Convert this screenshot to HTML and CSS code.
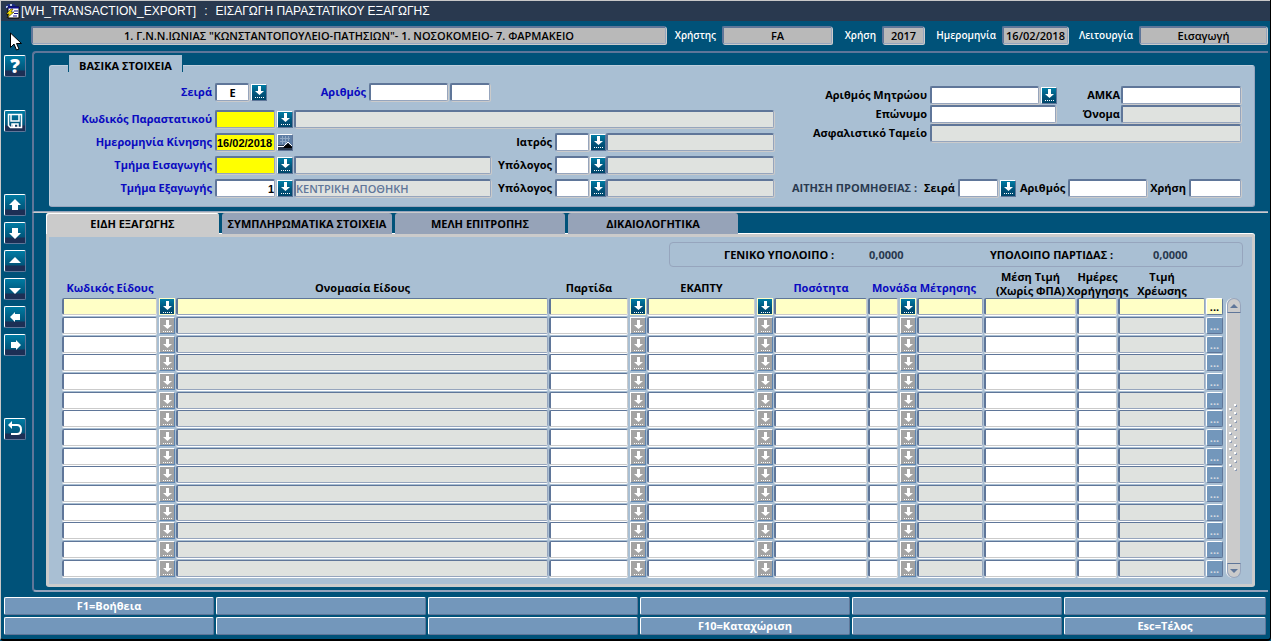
FILE: index.html
```html
<!DOCTYPE html>
<html lang="el">
<head>
    <meta charset="UTF-8">
    <meta name="viewport" content="width=device-width, initial-scale=1.0">
    <title>[WH_TRANSACTION_EXPORT] : ΕΙΣΑΓΩΓΗ ΠΑΡΑΣΤΑΤΙΚΟΥ ΕΞΑΓΩΓΗΣ</title>
    <link rel="stylesheet" href="styles.css">
</head>
<body>
    <!-- Shared icons -->
    <svg class="sprite" aria-hidden="true">
        <symbol id="i-list" viewBox="0 0 14 14">
            <path d="M6 1h3v5h3L7.500 10 3 6h3z" fill="#fff"/>
            <path d="M3 12.500h10" stroke="#fff" stroke-dasharray="1 1"/>
        </symbol>
        <symbol id="i-calendar" viewBox="0 0 14 14">
            <path d="M0 0h14v10H0z" fill="#5f7fa6"/>
            <path d="M2 3.500h10M2 6.500h7M4.500 1v8M7.500 1v8M10.500 1v5" stroke="#8fa8c4" fill="none"/>
            <path d="M0 11.500h6" stroke="#fff"/>
            <path d="M5 13l5-5 4 4v1z" fill="#000"/>
            <path d="M5 12l5-5 4 4" stroke="#fff" fill="none"/>
        </symbol>
        <symbol id="i-save" viewBox="0 0 18 18">
            <path d="M2.500 2.500h13v13h-11l-2-2z" fill="none" stroke="#fff" stroke-width="1.500"/>
            <path d="M5 3v6h8V3M6 16v-4h6v4" fill="none" stroke="#fff" stroke-width="1.500"/>
            <path d="M7 12h2v3H7z" fill="#fff"/>
        </symbol>
        <symbol id="i-up" viewBox="0 0 18 18"><path d="M9 3l6 6h-3v5H6V9H3z" fill="#fff"/></symbol>
        <symbol id="i-down" viewBox="0 0 18 18"><path d="M9 15l6-6h-3V4H6v5H3z" fill="#fff"/></symbol>
        <symbol id="i-left" viewBox="0 0 18 18"><path d="M4 9l5-5v2h5v6H9v2z" fill="#fff"/></symbol>
        <symbol id="i-right" viewBox="0 0 18 18"><path d="M15 9l-5-5v2H5v6h5v2z" fill="#fff"/></symbol>
        <symbol id="i-prev" viewBox="0 0 18 18"><path d="M9 5l6 6H3z" fill="#fff"/></symbol>
        <symbol id="i-next" viewBox="0 0 18 18"><path d="M9 14l6-6H3z" fill="#fff"/></symbol>
        <symbol id="i-undo" viewBox="0 0 18 18">
            <path d="M3 5h8q4 0 4 4.500t-4 4.500H5" fill="none" stroke="#fff" stroke-width="2"/>
            <path d="M2 5l4-4v8z" fill="#fff"/>
        </symbol>
    </svg>

    <header class="titlebar">
        <svg class="app-icon" viewBox="0 0 16 16" aria-hidden="true">
            <path d="M1 4l3-3h6l3 3-2 2H3z" fill="#1b2f86"/>
            <path d="M2 3h2v2H2zM6 1h2v2H6z" fill="#b8c4e8"/>
            <path d="M4 4h11v11H4z" fill="#fff" stroke="#000"/>
            <path d="M4 4.500h11" stroke="#10108c" stroke-width="2"/>
            <path d="M10 8h4M10 10.500h4M9 13h4" stroke="#10108c"/>
            <path d="M7 6L2 11h3l-2 4 7-6H7l2-3z" fill="#f6e000" stroke="#000" stroke-width=".5"/>
        </svg>
        <span>[WH_TRANSACTION_EXPORT]</span>
        <span>:</span>
        <span>ΕΙΣΑΓΩΓΗ ΠΑΡΑΣΤΑΤΙΚΟΥ ΕΞΑΓΩΓΗΣ</span>
    </header>

    <div class="main">
        <nav class="sidebar">
            <svg class="cursor" viewBox="0 0 13 19" aria-hidden="true">
                <path d="M.5 1v14.500l3.500-3.500 2.500 6 2.500-1-2.500-5.500h5z" fill="#fff" stroke="#000"/>
            </svg>
            <button class="tool help" aria-label="Βοήθεια">?</button>
            <button class="tool gap-1" aria-label="Αποθήκευση"><svg><use href="#i-save"/></svg></button>
            <button class="tool gap-2" aria-label="Πρώτη"><svg><use href="#i-up"/></svg></button>
            <button class="tool" aria-label="Τελευταία"><svg><use href="#i-down"/></svg></button>
            <button class="tool" aria-label="Προηγούμενη"><svg><use href="#i-prev"/></svg></button>
            <button class="tool" aria-label="Επόμενη"><svg><use href="#i-next"/></svg></button>
            <button class="tool" aria-label="Αριστερά"><svg><use href="#i-left"/></svg></button>
            <button class="tool" aria-label="Δεξιά"><svg><use href="#i-right"/></svg></button>
            <button class="tool gap-2" aria-label="Επιστροφή"><svg><use href="#i-undo"/></svg></button>
        </nav>

        <div class="content">
            <div class="infobar">
                <input class="info unit" aria-label="Μονάδα" value='1. Γ.Ν.Ν.ΙΩΝΙΑΣ "ΚΩΝΣΤΑΝΤΟΠΟΥΛΕΙΟ-ΠΑΤΗΣΙΩΝ"- 1. ΝΟΣΟΚΟΜΕΙΟ- 7. ΦΑΡΜΑΚΕΙΟ' readonly>
                <label class="user" for="user">Χρήστης</label>
                <input class="info w110" id="user" value="FA" readonly>
                <label class="year" for="year">Χρήση</label>
                <input class="info w42" id="year" value="2017" readonly>
                <label class="date" for="date">Ημερομηνία</label>
                <input class="info w66" id="date" value="16/02/2018" readonly>
                <label class="mode" for="mode">Λειτουργία</label>
                <input class="info w128" id="mode" value="Εισαγωγή" readonly>
            </div>

            <section class="frame frame-top">
                <h2 class="legend">ΒΑΣΙΚΑ ΣΤΟΙΧΕΙΑ</h2>
                <form class="basics">
                    <div class="basics-left">
                        <div class="row first">
                            <label class="lbl req" for="series">Σειρά</label>
                            <input class="w34 center" id="series" value="Ε">
                            <button type="button" class="lov" aria-label="Λίστα σειρών"><svg><use href="#i-list"/></svg></button>
                            <label class="lbl-num req" for="num">Αριθμός</label>
                            <input class="w79" id="num">
                            <input class="w40" aria-label="Αριθμός 2">
                        </div>
                        <div class="row">
                            <label class="lbl req" for="doc">Κωδικός Παραστατικού</label>
                            <input class="w60 must" id="doc">
                            <button type="button" class="lov" aria-label="Λίστα παραστατικών"><svg><use href="#i-list"/></svg></button>
                            <input class="grow" aria-label="Περιγραφή παραστατικού" readonly>
                        </div>
                        <div class="row">
                            <label class="lbl req" for="moved">Ημερομηνία Κίνησης</label>
                            <input class="w60 must" id="moved" value="16/02/2018">
                            <button type="button" class="lov cal" aria-label="Ημερολόγιο"><svg><use href="#i-calendar"/></svg></button>
                            <label class="lbl-mid" for="doctor">Ιατρός</label>
                            <input class="w34" id="doctor">
                            <button type="button" class="lov" aria-label="Λίστα ιατρών"><svg><use href="#i-list"/></svg></button>
                            <input class="w168" aria-label="Όνομα ιατρού" readonly>
                        </div>
                        <div class="row">
                            <label class="lbl req" for="dep-in">Τμήμα Εισαγωγής</label>
                            <input class="w60 must" id="dep-in">
                            <button type="button" class="lov" aria-label="Λίστα τμημάτων"><svg><use href="#i-list"/></svg></button>
                            <input class="grow" aria-label="Περιγραφή τμήματος εισαγωγής" readonly>
                            <label class="lbl-sub" for="resp-in">Υπόλογος</label>
                            <input class="w34" id="resp-in">
                            <button type="button" class="lov" aria-label="Λίστα υπολόγων"><svg><use href="#i-list"/></svg></button>
                            <input class="w168" aria-label="Όνομα υπολόγου εισαγωγής" readonly>
                        </div>
                        <div class="row">
                            <label class="lbl req" for="dep-out">Τμήμα Εξαγωγής</label>
                            <input class="w60 right" id="dep-out" value="1">
                            <button type="button" class="lov" aria-label="Λίστα τμημάτων"><svg><use href="#i-list"/></svg></button>
                            <input class="grow" aria-label="Περιγραφή τμήματος εξαγωγής" value="ΚΕΝΤΡΙΚΗ ΑΠΟΘΗΚΗ" readonly>
                            <label class="lbl-sub" for="resp-out">Υπόλογος</label>
                            <input class="w34" id="resp-out">
                            <button type="button" class="lov" aria-label="Λίστα υπολόγων"><svg><use href="#i-list"/></svg></button>
                            <input class="w168" aria-label="Όνομα υπολόγου εξαγωγής" readonly>
                        </div>
                    </div>

                    <div class="basics-right">
                        <div class="patient">
                            <div class="row">
                                <label class="lbl-pat" for="reg">Αριθμός Μητρώου</label>
                                <input class="w109" id="reg">
                                <button type="button" class="lov" aria-label="Λίστα μητρώου"><svg><use href="#i-list"/></svg></button>
                                <label class="lbl-amka" for="amka">ΑΜΚΑ</label>
                                <input class="w120" id="amka">
                            </div>
                            <div class="row">
                                <label class="lbl-pat" for="surname">Επώνυμο</label>
                                <input class="w126" id="surname">
                                <label class="lbl-amka" for="name">Όνομα</label>
                                <input class="w120" id="name" readonly>
                            </div>
                            <div class="row">
                                <label class="lbl-pat" for="fund">Ασφαλιστικό Ταμείο</label>
                                <input class="grow" id="fund" readonly>
                            </div>
                        </div>
                        <div class="row request">
                            <span class="request-title">ΑΙΤΗΣΗ ΠΡΟΜΗΘΕΙΑΣ :</span>
                            <label for="rq-series">Σειρά</label>
                            <input class="w40" id="rq-series">
                            <button type="button" class="lov" aria-label="Λίστα αιτήσεων"><svg><use href="#i-list"/></svg></button>
                            <label class="lbl-rq" for="rq-num">Αριθμός</label>
                            <input class="w79" id="rq-num">
                            <label class="lbl-rq" for="rq-year">Χρήση</label>
                            <input class="w52" id="rq-year">
                        </div>
                    </div>
                </form>
            </section>

            <section class="frame frame-bottom">
                <div class="tabs" role="tablist">
                    <button class="tab active" role="tab" aria-selected="true">ΕΙΔΗ ΕΞΑΓΩΓΗΣ</button>
                    <button class="tab" role="tab">ΣΥΜΠΛΗΡΩΜΑΤΙΚΑ ΣΤΟΙΧΕΙΑ</button>
                    <button class="tab" role="tab">ΜΕΛΗ ΕΠΙΤΡΟΠΗΣ</button>
                    <button class="tab" role="tab">ΔΙΚΑΙΟΛΟΓΗΤΙΚΑ</button>
                </div>
                <div class="panel">
                    <div class="totals">
                        <span>ΓΕΝΙΚΟ ΥΠΟΛΟΙΠΟ :</span>
                        <output>0,0000</output>
                        <span>ΥΠΟΛΟΙΠΟ ΠΑΡΤΙΔΑΣ :</span>
                        <output>0,0000</output>
                    </div>
                    <div class="items">
                        <table>
                            <colgroup>
                                <col class="c-code"><col class="c-btn"><col><col class="c-lot"><col class="c-btn">
                                <col class="c-ekapty"><col class="c-btn"><col class="c-qty"><col class="c-unit"><col class="c-btn">
                                <col class="c-desc"><col class="c-avg"><col class="c-days"><col class="c-charge"><col class="c-more">
                            </colgroup>
                            <thead>
                                <tr>
                                    <th class="req">Κωδικός Είδους</th>
                                    <th></th>
                                    <th>Ονομασία Είδους</th>
                                    <th>Παρτίδα</th>
                                    <th></th>
                                    <th>ΕΚΑΠΤΥ</th>
                                    <th></th>
                                    <th class="req">Ποσότητα</th>
                                    <th class="req unit-head" colspan="3">Μονάδα Μέτρησης</th>
                                    <th class="two">Μέση Τιμή<br>(Χωρίς ΦΠΑ)</th>
                                    <th class="two"><span>Ημέρες<br>Χορήγησης</span></th>
                                    <th class="two">Τιμή<br>Χρέωσης</th>
                                    <th></th>
                                </tr>
                            </thead>
                            <tbody id="rows"></tbody>
                        </table>
                        <div class="scroll">
                            <button class="scroll-btn top" aria-label="Πάνω"><svg viewBox="0 0 8 4"><path d="M4 0l4 4H0z"/></svg></button>
                            <svg class="grip" aria-hidden="true">
                                <pattern id="dots" width="10" height="8" patternUnits="userSpaceOnUse">
                                    <path d="M1 5h2v2H1zM6 1h2v2H6z" fill="#8f9db5"/>
                                    <path d="M0 4h2v2H0zM5 0h2v2H5z" fill="#fff"/>
                                </pattern>
                                <rect width="10" height="68" fill="url(#dots)"/>
                            </svg>
                            <button class="scroll-btn bottom" aria-label="Κάτω"><svg viewBox="0 0 8 4"><path d="M0 0h8L4 4z"/></svg></button>
                        </div>
                    </div>
                </div>
            </section>
        </div>
    </div>

    <footer class="keys">
        <button>F1=Βοήθεια</button>
        <button></button>
        <button></button>
        <button></button>
        <button></button>
        <button></button>
        <button></button>
        <button></button>
        <button></button>
        <button>F10=Καταχώριση</button>
        <button></button>
        <button>Esc=Τέλος</button>
    </footer>

    <script src="script.js"></script>
</body>
</html>
```
FILE: styles.css
```css
/* General Styles */
* {
    box-sizing: border-box;
}

body {
    margin: 0;
    min-height: 100vh;
    display: flex;
    flex-direction: column;
    background: #005279;
    border-left: 1px solid #c8c8c8;
    border-right: 1px solid #000;
    border-bottom: 2px solid #000;
    border-radius: 0 0 4px 4px;
    font-family: "Open Sans", "Noto Sans", sans-serif;
    font-size: 11px;
    font-weight: 700;
    line-height: 14px;
    color: #000;
}

button,
input {
    font: inherit;
    margin: 0;
    padding: 0;
    border-radius: 0;
}

.sprite {
    position: absolute;
    width: 0;
    height: 0;
}

/* Title */
.titlebar {
    display: flex;
    align-items: center;
    gap: 8px;
    height: 21px;
    padding-left: 3px;
    border-top: 1px solid #c8c8c8;
    background: #29394f;
    color: #fff;
    font: 12px/16px "Liberation Sans", Arial, sans-serif;
}

.app-icon {
    width: 16px;
    height: 16px;
    margin-right: -7px;
}

.main {
    flex: 1;
    display: flex;
}

/* Left toolbar */
.sidebar {
    position: relative;
    flex: 0 0 30px;
    display: flex;
    flex-direction: column;
    gap: 6px;
    padding: 34px 0 0 3px;
}

.cursor {
    position: absolute;
    top: 11px;
    left: 9px;
    width: 13px;
    height: 19px;
}

.tool {
    width: 22px;
    height: 22px;
    border: 1px solid #5f7699;
    border-top-color: #fff;
    border-left-color: #fff;
    border-radius: 2px;
    background: linear-gradient(#007ba3, #005f85 50%, #00557a 72%, #1c2f55 73%);
    color: #fff;
}

.tool svg {
    display: block;
    width: 18px;
    height: 18px;
    margin: 0 auto;
}

.help {
    font-size: 19px;
    line-height: 18px;
    font-weight: 800;
}

.gap-1 {
    margin-top: 27px;
}

.gap-2 {
    margin-top: 56px;
}

/* Content */
.content {
    flex: 1;
    min-width: 0;
    padding-top: 5px;
}

.infobar {
    display: flex;
    align-items: center;
    padding: 0 3px 7px 0;
    color: #fff;
    font-weight: 600;
}

.infobar label {
    font-size: 10px;
    text-align: right;
    padding-right: 6px;
    white-space: nowrap;
}

.info,
.row input {
    height: 18px;
    min-width: 0;
    padding: 0;
    border: 1px solid #96a5bd;
    border-top: 2px solid #5f7699;
    border-left: 2px solid #5f7699;
    border-radius: 2px;
    box-shadow: 1px 1px 0 #cbcbcb;
    background: #fff;
    color: #000;
}

.infobar .info {
    height: 18px;
    background: #b9b9b9;
    text-align: center;
}

.info.unit {
    flex: 1;
}

.user {
    width: 56px;
}

.year {
    width: 50px;
}

.date {
    width: 78px;
}

.mode {
    width: 71px;
}

/* Frames */
.frame {
    border-left: 2px solid #5f7699;
    margin: 0 2px 0 1px;
}

.frame-top {
    border-top: 2px solid #5f7699;
    border-bottom: 1px solid #96a5bd;
    border-radius: 4px 0 0 0;
    padding: 2px 13px 4px 15px;
}

.legend {
    position: relative;
    width: 115px;
    height: 17px;
    margin: 0 0 -7px 19px;
    border: solid #005279;
    border-width: 0 1px;
    background: #a9bfd3;
    font-size: 11px;
    line-height: 21px;
    text-align: center;
}

.basics {
    display: flex;
    gap: 18px;
    padding: 17px 13px 9px 0;
    border: 1px solid #96a5bd;
    border-top-color: #c0cfdd;
    border-left-color: #c0cfdd;
    border-radius: 3px;
    background: #a9bfd3;
}

.basics-left {
    flex: 1;
    min-width: 0;
    display: flex;
    flex-direction: column;
    gap: 5px;
}

.basics-right {
    flex: 0 0 449px;
    display: flex;
    flex-direction: column;
    justify-content: space-between;
    padding-top: 3px;
}

.row {
    display: flex;
    align-items: center;
}

.row.first {
    margin-bottom: 4px;
}

.row label {
    text-align: right;
    padding-right: 3px;
    white-space: nowrap;
}

.row .req,
.req {
    color: #0a0ac0;
}

.row .must {
    background: #ff0;
}

.row .must,
.row .right {
    font-family: "Liberation Sans", Arial, sans-serif;
}

.row input[readonly] {
    background: #dfe2df;
    color: #5f7699;
    font-weight: 600;
}

.row .center {
    text-align: center;
}

.row .right {
    text-align: right;
}

.row .grow {
    flex: 1;
}

.lbl {
    width: 165px;
}

.lbl-num {
    width: 101px;
}

.row .lbl-mid {
    flex: 1;
}

.lbl-sub {
    width: 64px;
}

.lbl-pat {
    width: 138px;
}

.row .lbl-amka {
    flex: 1;
    padding-right: 1px;
}

.w34 { width: 34px; }
.w40 { width: 40px; }
.w42 { width: 42px; }
.w52 { width: 52px; }
.w60 { width: 60px; }
.w66 { width: 66px; }
.w79 { width: 79px; }
.w109 { width: 109px; }
.w110 { width: 110px; }
.w120 { width: 120px; }
.w126 { width: 126px; }
.w128 { width: 128px; }
.w168 { width: 168px; }

#num {
    margin-right: 2px;
}

.lov {
    flex: none;
    width: 16px;
    height: 17px;
    margin: 0 0 0 1px;
    border: 1px solid #5f7699;
    border-top-color: #fff;
    border-left-color: #fff;
    background: linear-gradient(#007ba3, #005279 60%, #00466a);
}

.row .w60 + .lov,
.row .w40 + .lov,
.row .w109 + .lov,
.row .center + .lov {
    margin: 0 1px 0 2px;
}

.lov svg {
    display: block;
    width: 14px;
    height: 14px;
}

.lov.cal {
    background: #29394f;
}

.patient .row {
    margin-bottom: 1px;
}

.request-title {
    flex: 1;
    color: #29394f;
    white-space: nowrap;
}

.lbl-rq {
    padding-left: 3px;
}

/* Tabs */
.frame-bottom {
    border-top: 1px solid #cbcbcb;
    border-bottom: 2px solid #96a5bd;
    border-radius: 0 0 0 4px;
    padding: 0 13px 3px 12px;
}

.tabs {
    display: flex;
    gap: 3px;
}

.tab {
    width: 170px;
    height: 21px;
    border: 0;
    border-radius: 3px 3px 0 0;
    background: #96a3b8;
    white-space: nowrap;
}

.tab.active {
    width: 173px;
    background: #cbcbcb;
    box-shadow: inset 1px 1px 0 #fff;
}

.panel {
    border: 3px solid #cbcbcb;
    border-radius: 0 3px 3px 3px;
    background: #a9bfd3;
    box-shadow: 0 -1px 0 #fff;
    padding: 5px 9px 6px 13px;
}

.totals {
    display: flex;
    align-items: center;
    width: 574px;
    height: 25px;
    margin: 0 0 3px auto;
    padding-left: 54px;
    border: 1px solid #96a5bd;
    border-radius: 4px;
}

.totals span {
    width: 145px;
    white-space: nowrap;
}

.totals output {
    width: 121px;
    color: #29394f;
}

.totals output + span {
    width: 163px;
}

.totals output:last-child {
    width: auto;
}

/* Items table */
.items {
    display: flex;
    gap: 2px;
    padding-right: 3px;
}

table {
    flex: 1;
    min-width: 0;
    table-layout: fixed;
    border-collapse: collapse;
}

th {
    height: 28px;
    padding: 0 0 3px;
    vertical-align: bottom;
    white-space: nowrap;
}

th.two {
    padding-bottom: 0;
}

th.two span {
    display: block;
    margin: 0 -12px;
}

th.unit-head {
    text-align: left;
    padding-left: 4px;
}

td {
    height: 19px;
    padding: 0;
    line-height: 0;
    vertical-align: top;
}

tr:nth-child(3n) td {
    height: 18px;
}

.c-code { width: 96px; }
.c-btn { width: 18px; }
.c-lot { width: 80px; }
.c-ekapty { width: 109px; }
.c-qty { width: 94px; }
.c-unit { width: 31px; }
.c-desc { width: 67px; }
.c-avg { width: 93px; }
.c-days { width: 41px; }
.c-charge { width: 88px; }
.c-more { width: 18px; }

td input {
    width: calc(100% - 1px);
    height: 17px;
    border: 1px solid #cbcbcb;
    border-top-color: #5f7699;
    border-left: 2px solid #5f7699;
    border-radius: 2px;
    background: #fff;
    box-shadow: 0 1px 0 #fff;
    line-height: 14px;
}

td input[readonly] {
    background: #dfe2df;
    border-right-color: #96a5bd;
    border-bottom-color: #96a5bd;
}

td .lov {
    border-color: #fff #5f85b0 #5f85b0 #fff;
    background: #a3a3a3;
}

td .more {
    width: 17px;
    height: 17px;
    border: 1px solid #5f7699;
    border-top-color: #fff;
    border-left-color: #fff;
    border-radius: 2px;
    background: #7397bb;
    color: #d5dbe2;
    line-height: 14px;
}

/* Current row */
.current input,
.current input[readonly],
.current .more {
    background: #ffffc6;
}

.current .more {
    color: #000;
}

.current .lov {
    border-color: #ffffc6;
    background: linear-gradient(#007ba3, #005279 60%, #00466a);
}

/* Scrollbar */
.scroll {
    width: 14px;
    margin-top: 28px;
    display: flex;
    flex-direction: column;
    justify-content: space-between;
    align-items: center;
    background: #cbcbcb;
    border-left: 1px solid #fff;
    border-radius: 7px;
}

.scroll-btn {
    width: 14px;
    height: 15px;
    border: 1px solid #96a5bd;
    background: #cbcbcb;
}

.scroll-btn.top {
    border-radius: 7px 7px 0 0;
    border-bottom-color: #5f7699;
}

.scroll-btn.bottom {
    border-radius: 0 0 7px 7px;
    border-top-color: #5f7699;
}

.scroll-btn svg {
    display: block;
    width: 8px;
    height: 4px;
    margin: 0 auto;
    fill: #5f7699;
}

.grip {
    width: 10px;
    height: 68px;
}

/* Function keys */
.keys {
    display: grid;
    grid-template-columns: repeat(5, 210fr) 202fr;
    gap: 2px;
    padding: 5px 4px 4px 3px;
}

.keys button {
    height: 18px;
    border: 1px solid #5f7699;
    border-top-color: #fff;
    border-left-color: #fff;
    border-radius: 2px;
    background: #7397bb;
    color: #fff;
}
```
FILE: script.js
```js
// i = input, r = read-only, b = list button, m = more
const columns = [
    ['i', 'Κωδικός Είδους'], ['b', 'Λίστα ειδών'], ['r', 'Ονομασία Είδους'],
    ['i', 'Παρτίδα'], ['b', 'Λίστα παρτίδων'], ['i', 'ΕΚΑΠΤΥ'], ['b', 'Λίστα ΕΚΑΠΤΥ'],
    ['i', 'Ποσότητα'], ['i', 'Μονάδα'], ['b', 'Λίστα μονάδων'], ['r', 'Μονάδα Μέτρησης'],
    ['i', 'Μέση Τιμή'], ['i', 'Ημέρες Χορήγησης'], ['r', 'Τιμή Χρέωσης'], ['m', 'Περισσότερα']
];

function cell(type, label) {
    if (type === 'b') {
        return `<td><button class="lov" aria-label="${label}"><svg><use href="#i-list"/></svg></button></td>`;
    }
    if (type === 'm') {
        return `<td><button class="more" aria-label="${label}">...</button></td>`;
    }
    return `<td><input aria-label="${label}"${type === 'r' ? ' readonly' : ''}></td>`;
}

let html = '';
for (let i = 0; i < 15; i++) {
    html += `<tr${i === 0 ? ' class="current"' : ''}>` + columns.map(c => cell(c[0], c[1])).join('') + '</tr>';
}
document.getElementById('rows').innerHTML = html;
```
